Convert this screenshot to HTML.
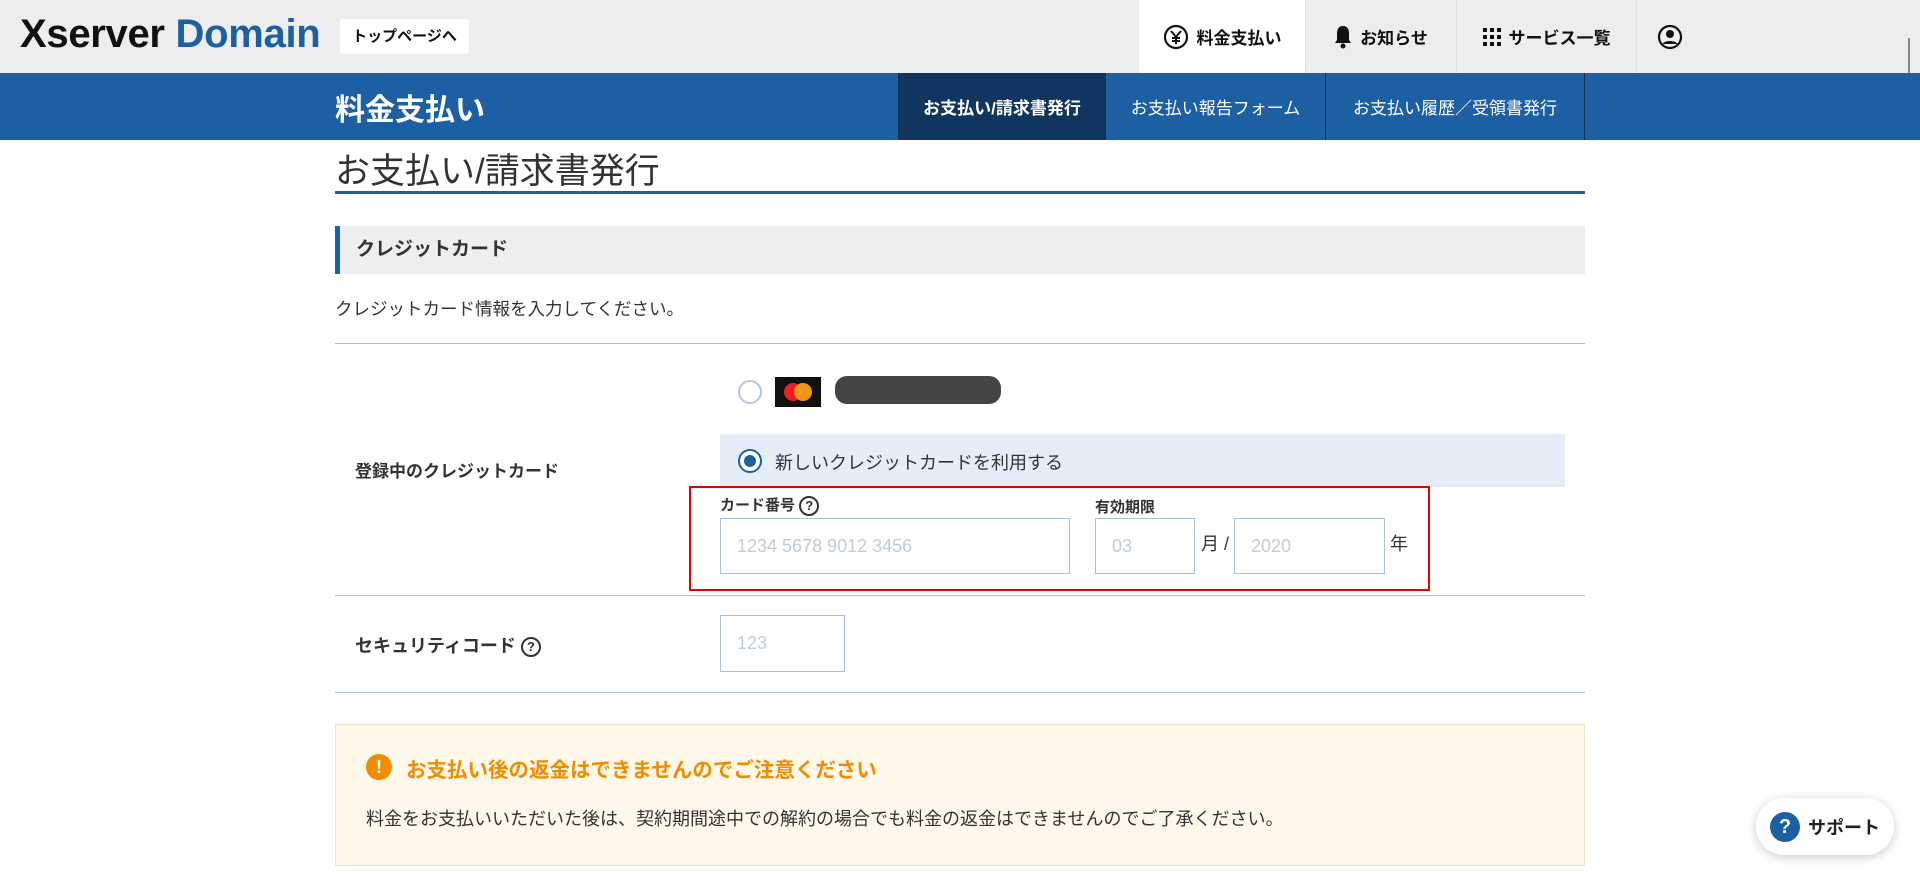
<!DOCTYPE html>
<html><head><meta charset="utf-8"><style>
*{box-sizing:border-box;margin:0;padding:0}
body{width:1920px;height:880px;overflow:hidden;background:#fff;font-family:"Liberation Sans","Noto Sans CJK JP",sans-serif;color:#333;position:relative}
.a{position:absolute}
.hdr{left:0;top:0;width:1920px;height:73px;background:#ededed}
.logo{left:20px;top:12px;font-size:40px;font-weight:bold;letter-spacing:-0.3px;color:#111}
.logo span{color:#1c5fa3}
.topbtn{left:340px;top:19px;width:129px;height:35px;background:#fff;border-radius:3px;font-size:15px;font-weight:bold;color:#111;text-align:center;line-height:35px}
.tab{top:0;height:73px;display:flex;align-items:center;justify-content:center;font-size:17px;font-weight:bold;color:#111;border-left:1px solid #ddd;gap:8px}
.sub{left:0;top:73px;width:1920px;height:67px;background:#1c5fa3}
.sub .t{left:335px;top:12px;font-size:30px;font-weight:bold;color:#fff}
.st{top:0;height:67px;display:flex;align-items:center;justify-content:center;color:#fff;font-size:17px;border-right:1px solid #0e2f55}
.title{left:335px;top:143px;font-size:35px;color:#333}
.tline{left:335px;top:191px;width:1250px;height:3px;background:#1c5fa3}
.sec{left:335px;top:226px;width:1250px;height:48px;background:#eee;border-left:5px solid #1c5fa3;font-size:19px;font-weight:bold;line-height:48px;padding-left:16px}
.hr{left:335px;width:1250px;height:1px;background:#a9bfd3}
.lbl{font-size:17px;font-weight:bold;color:#333}
.inp{border:1px solid #a8c0d8;background:#fff;font-size:18px;color:#c0ccd8;padding-left:16px;display:flex;align-items:center}
.q{display:inline-block;width:20px;height:20px;border:2px solid #333;border-radius:50%;font-size:13px;text-align:center;line-height:16px;font-weight:bold;vertical-align:middle}
</style></head><body>
<div class="a hdr"></div>
<div class="a logo">Xserver <span>Domain</span></div>
<div class="a topbtn">トップページへ</div>
<div class="a tab" style="left:1139px;width:166px;background:#fff;border-left:none">
<svg width="26" height="26" viewBox="0 0 26 26"><circle cx="13" cy="13" r="11" fill="none" stroke="#111" stroke-width="2.2"/><path d="M8 7l5 6 5-6M13 13v7M9 14h8M9 17h8" stroke="#111" stroke-width="2" fill="none"/></svg>料金支払い</div>
<div class="a tab" style="left:1305px;width:151px">
<svg width="18" height="26" viewBox="0 0 18 26"><path d="M9 2c-4 0-6 3-6 7v7l-2 3h16l-2-3V9c0-4-2-7-6-7z" fill="#111"/><circle cx="9" cy="22" r="2.5" fill="#111"/></svg>お知らせ</div>
<div class="a tab" style="left:1456px;width:180px">
<svg width="18" height="18" viewBox="0 0 18 18" fill="#111"><rect x="0" y="0" width="4" height="4"/><rect x="7" y="0" width="4" height="4"/><rect x="14" y="0" width="4" height="4"/><rect x="0" y="7" width="4" height="4"/><rect x="7" y="7" width="4" height="4"/><rect x="14" y="7" width="4" height="4"/><rect x="0" y="14" width="4" height="4"/><rect x="7" y="14" width="4" height="4"/><rect x="14" y="14" width="4" height="4"/></svg>サービス一覧</div>
<div class="a tab" style="left:1636px;width:66px">
<svg width="26" height="26" viewBox="0 0 26 26"><circle cx="13" cy="13" r="11" fill="none" stroke="#111" stroke-width="2.2"/><circle cx="13" cy="10" r="4" fill="#111"/><path d="M5.5 20c2-4 13-4 15 0" fill="#111"/></svg></div>
<div class="a" style="left:1908px;top:38px;width:2px;height:100px;background:#888"></div>

<div class="a sub"><div class="a t">料金支払い</div>
<div class="a st" style="left:898px;width:208px;background:#10355e;font-weight:bold;border-left:1px solid #0e2f55">お支払い/請求書発行</div>
<div class="a st" style="left:1106px;width:220px">お支払い報告フォーム</div>
<div class="a st" style="left:1326px;width:259px">お支払い履歴／受領書発行</div>
</div>

<div class="a title">お支払い/請求書発行</div>
<div class="a tline"></div>
<div class="a sec">クレジットカード</div>
<div class="a" style="left:335px;top:296px;font-size:17.5px">クレジットカード情報を入力してください。</div>
<div class="a hr" style="top:343px"></div>

<div class="a" style="left:738px;top:380px;width:24px;height:24px;border:2px solid #b8c8d8;border-radius:50%"></div>
<div class="a" style="left:775px;top:377px;width:46px;height:30px;background:#111"><svg width="46" height="30"><circle cx="18" cy="15" r="9" fill="#eb1c24"/><circle cx="28" cy="15" r="9" fill="#f79e1b" opacity=".95"/></svg></div>
<div class="a" style="left:835px;top:376px;width:166px;height:28px;background:#444;border-radius:12px"></div>

<div class="a" style="left:720px;top:434px;width:845px;height:53px;background:#e5eef8"></div>
<div class="a" style="left:738px;top:449px;width:24px;height:24px;border:2px solid #1c5fa3;border-radius:50%;background:#fff"><div class="a" style="left:4px;top:4px;width:12px;height:12px;border-radius:50%;background:#1c5fa3"></div></div>
<div class="a" style="left:775px;top:449px;font-size:18px">新しいクレジットカードを利用する</div>
<div class="a lbl" style="left:355px;top:457px">登録中のクレジットカード</div>

<div class="a" style="left:689px;top:486px;width:741px;height:105px;border:2px solid #e60000"></div>
<div class="a lbl" style="left:720px;top:494px;font-size:15px">カード番号 <span class="q">?</span></div>
<div class="a lbl" style="left:1095px;top:496px;font-size:15px">有効期限</div>
<div class="a inp" style="left:720px;top:518px;width:350px;height:56px">1234 5678 9012 3456</div>
<div class="a inp" style="left:1095px;top:518px;width:100px;height:56px">03</div>
<div class="a" style="left:1201px;top:530px;font-size:18px">月 /</div>
<div class="a inp" style="left:1234px;top:518px;width:151px;height:56px">2020</div>
<div class="a" style="left:1390px;top:530px;font-size:18px">年</div>
<div class="a hr" style="top:595px"></div>

<div class="a lbl" style="left:355px;top:632px;font-size:18px">セキュリティコード <span class="q">?</span></div>
<div class="a inp" style="left:720px;top:615px;width:125px;height:57px">123</div>
<div class="a hr" style="top:692px"></div>

<div class="a" style="left:335px;top:724px;width:1250px;height:142px;background:#fdf8e9;border:1px solid #efe6c4"></div>
<div class="a" style="left:366px;top:754px;width:26px;height:26px;border-radius:50%;background:#f08c00;color:#fff;font-weight:bold;text-align:center;line-height:26px;font-size:18px">!</div>
<div class="a" style="left:406px;top:753px;font-size:20.5px;font-weight:bold;color:#f08c00">お支払い後の返金はできませんのでご注意ください</div>
<div class="a" style="left:366px;top:805px;font-size:18px">料金をお支払いいただいた後は、契約期間途中での解約の場合でも料金の返金はできませんのでご了承ください。</div>

<div class="a" style="left:1756px;top:798px;width:138px;height:57px;background:#fff;border-radius:28px;box-shadow:0 2px 10px rgba(0,0,0,.2);display:flex;align-items:center;justify-content:center;gap:8px;font-size:18px;font-weight:bold;color:#222">
<span style="display:inline-block;width:30px;height:30px;border-radius:50%;background:#1c5fa3;color:#fff;text-align:center;line-height:30px;font-size:20px">?</span>サポート</div>
</body></html>
